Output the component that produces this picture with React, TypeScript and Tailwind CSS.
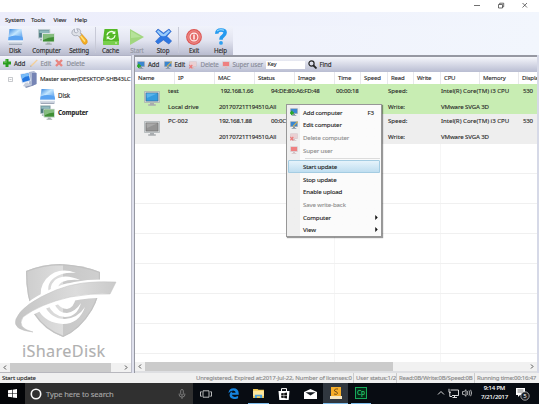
import React from 'react';

type P = { className?: string; children?: React.ReactNode };

const T = ({ className = '', children }: P) => (
  <span className={`block shrink-0 whitespace-pre ${className}`}>{children}</span>
);

const DiskIcon = ({ className = '' }: P) => (
  <svg viewBox="0 0 16 16" preserveAspectRatio="none" className={`block shrink-0 ${className}`}>
    <defs>
      <linearGradient id="disk" x1="0" y1="0" x2="1" y2="1">
        <stop offset="0" stopColor="#2f80dc" /><stop offset=".42" stopColor="#c4e7ff" /><stop offset="1" stopColor="#2f82e4" />
      </linearGradient>
    </defs>
    <path d="M1.6 0H14.4L16 12H0Z" fill="url(#disk)" />
    <path d="M.6 8L0 12H16L15.4 8Q8 5 .6 8" fill="#5aa3f2" />
    <path d="M0 11.5H16V15Q16 16 15 16H1Q0 16 0 15Z" fill="#d3dae4" />
    <path d="M0 11.5H16V12.7H0Z" fill="#f6f9fc" /><path d="M1 15.3H15" stroke="#929cac" />
  </svg>
);

const ComputersIcon = ({ className = '' }: P) => (
  <svg viewBox="0 0 16 16" preserveAspectRatio="none" className={`block shrink-0 ${className}`}>
    <path d="M.5.8H11V9H.5Z" fill="#4f7b80" stroke="#b7c6ca" /><path d="M1.3 1.5H10.3V4H1.3Z" fill="#8fb9bd" />
    <path d="M2 10H5V11.5H2Z" fill="#9eabb0" />
    <path d="M4.2 4.5H15.5V13H4.2Z" fill="#3f8f35" stroke="#d8e2e0" />
    <path d="M4.8 5H15V8Q10 8 4.8 11Z" fill="#86bd80" />
    <path d="M8.3 13.4H11.5V14.6H13V15.7H7V14.6H8.3Z" fill="#a3b0ad" />
  </svg>
);

const ServerIcon = () => (
  <svg viewBox="0 0 17 17" className="block h-[17px] w-[17px] shrink-0">
    <path d="M9 1L14 0 16.5 2V13L12 15 9 13Z" fill="#aeb9d3" /><path d="M12 2L16.5 2V13L12 15Z" fill="#7685b5" />
    <path d="M0 3L9 1.2 11 10 2 12.5Z" fill="#d6e2f4" /><path d="M1 3.8L8.4 2.3 10 9.3 2.7 11.3Z" fill="#2476df" />
    <path d="M1 3.8L8.4 2.3 9 5Q5 5 2 8Z" fill="#79bdf8" />
    <path d="M5 12L8 11.3 9 13 12 14 6 16 3 15Z" fill="#c6cedd" /><path d="M5 15.8L12 14V15L6 17Z" fill="#8794b5" />
  </svg>
);

const WrenchIcon = () => (
  <svg viewBox="0 0 17 17" className="block h-[17px] w-[17px]">
    <path d="M7.5 7L10.3 5.5 16 12Q17.2 15 14.5 16.4Q12 16.5 10.8 13.6Z" fill="#f4af22" stroke="#cf8519" strokeWidth=".5" />
    <path d="M9 7.2L14 13.5" stroke="#ffe17b" strokeWidth="1.5" />
    <path d="M3.4 1L3.6 4.2 5.5 5 7 3.5 5.7.7Q9.3.2 9.7 3.3L9.2 5.2 10.5 6.8 8.3 8.8 6.5 7.5Q2.2 8.6.8 5.2Q.5 2.4 3.4 1Z" fill="#dfe2e8" stroke="#8b91a0" strokeWidth=".6" />
  </svg>
);

const CacheIcon = () => (
  <svg viewBox="0 0 16 16" className="block h-4 w-4">
    <path d="M1.5 0H14.5L16 11V14.5Q16 16 14.5 16H1.5Q0 16 0 14.5V11Z" fill="#55b928" />
    <path d="M0 12H16V14.5Q16 16 14.5 16H1.5Q0 16 0 14.5Z" fill="#79cf4c" />
    <path d="M3.9 6.4A4.3 4.3 0 0 1 11.2 3.8M12.1 6.2A4.3 4.3 0 0 1 4.8 8.8" fill="none" stroke="#efffe7" strokeWidth="1.3" />
    <path d="M12.3 1.8V5.1H9ZM3.7 10.7V7.4H7Z" fill="#efffe7" /><circle cx="13" cy="14" r=".8" fill="#effeea" />
  </svg>
);

const StopIcon = () => (
  <svg viewBox="0 0 17 17" className="block h-[17px] w-[17px]">
    <path d="M3 1L8.5 5 14 1 16.2 3.4 11.8 8.2 16.6 13 13.8 16 8.4 12 3 16 .5 13.4 5.3 8.4 .8 3.4Z" fill="#2f78e2" stroke="#2a61c4" strokeWidth=".6" />
    <path d="M3.1 1.9L8.5 6.2 13.8 1.9 15.2 3.3 10.5 7.9Q7 8.6 5.8 7.8L1.8 3.4Z" fill="#9bccfb" />
  </svg>
);

const ExitIcon = () => (
  <svg viewBox="0 0 16 16" className="block h-4 w-4">
    <circle cx="8" cy="8" r="7.9" fill="#dd5552" /><circle cx="8" cy="8" r="6.3" fill="#e56c69" stroke="#f4aaa7" strokeWidth=".6" />
    <circle cx="8" cy="8" r="3.9" fill="none" stroke="#fff0ef" strokeWidth="1.1" /><path d="M8 5.5V10.5" stroke="#fff0ef" strokeWidth="1.5" />
  </svg>
);

const HelpIcon = () => (
  <svg viewBox="0 0 12 17" className="block h-[17px] w-3">
    <path d="M2 5.8Q1.5 2 6 2T10 5Q10 6.7 7.8 8.2Q6 9.2 6 11.8" fill="none" stroke="#249af0" strokeWidth="3.6" />
    <path d="M2 3Q5 .7 9 2.3" fill="none" stroke="#87d3ff" strokeWidth="1.4" /><circle cx="6" cy="14.9" r="1.9" fill="#2d9ff0" />
  </svg>
);

const PlayIcon = () => (
  <svg viewBox="0 0 14 16" className="block h-4 w-3.5"><path d="M0 0L14 8 0 16Z" fill="#a1d67f" /><path d="M1 2L11 8 1 9Z" fill="#b6e29a" /></svg>
);

const PlusIcon = () => (
  <svg viewBox="0 0 8 8" className="block h-2 w-2 shrink-0"><path d="M2.5 0H5.5V2.5H8V5.5H5.5V8H2.5V5.5H0V2.5H2.5Z" fill="#2a9c20" /><path d="M3.3.5V3.4H.6" stroke="#7dd569" fill="none" strokeWidth=".6" /></svg>
);
const PencilIcon = () => (
  <svg viewBox="0 0 8 8" className="block h-2 w-2 shrink-0"><path d="M0 8L1 6 6.8.4 7.8 1.3 2.2 7Z" fill="#f3cf9a" /><path d="M0 8L.7 6.2 1.8 7.2Z" fill="#aaa" /></svg>
);
const DeleteIcon = () => (
  <svg viewBox="0 0 8 8" className="block h-2 w-2 shrink-0"><path d="M1 1L7 7M7 1L1 7" stroke="#e88580" strokeWidth="2.4" /></svg>
);

const Pc = ({ kind }: { kind: 'add' | 'edit' | 'del' | 'user' }) => {
  const faded = kind === 'del' || kind === 'user';
  return (
    <svg viewBox="0 0 8 8" className="block h-2 w-2 shrink-0">
      <path d="M.3.4H7.7V5.8H.3Z" fill={faded ? '#d7c4c8' : '#8095ab'} />
      <path d="M1 1H7V5H1Z" fill={kind === 'user' ? '#ef8080' : faded ? '#ead0d3' : '#3a86d0'} />
      <path d="M3 6H5V7H6.3V7.8H1.7V7H3Z" fill={faded ? '#d5c1c4' : '#8294a2'} />
      {kind === 'add' && <path d="M1.8 2.8V7M0 5H4" stroke="#28a724" strokeWidth="1.7" />}
      {kind === 'edit' && <path d="M3 5.3L7.6.7" stroke="#d8b34e" strokeWidth="1.1" />}
      {kind === 'del' && <path d="M.3 4L3.3 7.3M3.3 4L.3 7.3" stroke="#eb7979" strokeWidth="1.2" />}
    </svg>
  );
};

const Monitor = ({ on }: { on?: boolean }) => (
  <svg viewBox="0 0 16 15" className="block h-[15px] w-4">
    <path d="M.5.5H15.5V11.5H.5Z" fill="#cdd0d2" stroke="#a1a7aa" strokeWidth=".6" />
    <path d="M2 2H14V10H2Z" fill={on ? '#369cdf' : '#949494'} stroke={on ? '#356889' : '#6c6c6c'} strokeWidth=".6" />
    <path d="M2.5 2.5H13L3 7Z" fill={on ? '#5ab4eb' : '#a9a9a9'} />
    <path d="M6 12H10V13.2H11.8V14.7H4.2V13.2H6Z" fill="#a8acaf" />
  </svg>
);

const Tool = ({ label, className, children, dim }: P & { label: string; dim?: boolean }) => (
  <div className={`flex h-full shrink-0 flex-col items-center ${className}`}>
    <div className="flex h-[19px] items-center justify-center">{children}</div>
    <T className={`mt-px text-[6.2px] leading-[8px] tracking-[-0.12px] ${dim ? 'text-[#9295a0]' : ''}`}>{label}</T>
  </div>
);

const Arrow = ({ right }: { right?: boolean }) => (
  <svg viewBox="0 0 10 9" className="block h-[9px] w-[10px] shrink-0"><path d={right ? 'M4 2.5L6 4.5 4 6.5' : 'M6 2.5L4 4.5 6 6.5'} fill="none" stroke="#505050" /></svg>
);

const Logo = () => (
  <svg viewBox="0 0 104 76" className="block h-[76px] w-[104px]">
    <defs>
      <linearGradient id="shield"><stop offset="0" stopColor="#c8c8c8" /><stop offset=".47" stopColor="#dedede" /><stop offset=".475" stopColor="#c8c8c8" /><stop offset="1" stopColor="#d3d3d3" /></linearGradient>
      <linearGradient id="sweep"><stop offset="0" stopColor="#c4c4c4" /><stop offset=".6" stopColor="#dcdcdc" /><stop offset="1" stopColor="#cacaca" /></linearGradient>
      <clipPath id="shieldEdge"><path d="M12 9Q29 2 46 2Q69 3 86 10V20Q86 34 78 48Q66 68 49 75Q30 68 20 52Q12 36 12 9Z" /></clipPath>
    </defs>
    <g clipPath="url(#shieldEdge)">
      <path d="M0 0H104V76H0Z" fill="url(#shield)" />
      <path d="M12 9Q29 2 46 2Q69 3 86 10V20Q86 34 78 48Q66 68 49 75Q30 68 20 52Q12 36 12 9Z" fill="none" stroke="#c2c2c2" strokeWidth="2.4" />
      <path d="M62 11Q44 4 32 17Q24 27 28 38L36 34Q31 23 40 16Q48 10 62 11Z" fill="#fff" />
      <path d="M66 18Q50 11 41 18Q34 25 38 33L44 31Q42 24 48 20Q55 17 66 18Z" fill="#fff" />
      <path d="M61 23Q51 19 46 25Q43 29 46 31L61 27Z" fill="#fff" />
      <path d="M19 44L30 43Q37 57 51 57Q64 56 71 45Q65 62 49 62Q32 61 25 49Z" fill="#fff" />
      <path d="M34 42L40 41Q44 51 53 51Q61 50 67 41Q63 55 51 55Q38 54 34 42Z" fill="#fff" />
      <path d="M42 39L62 35Q60 46 53 47Q46 47 42 39Z" fill="#fff" />
    </g>
    <path d="M104 18Q63 15 37 27Q5 42 -1 57Q-3 68 20 71Q8 67 11 58Q31 44 58 39Q80 35 98 36Z" fill="#fff" />
    <path d="M102 20Q66 18 42 28Q8 42 2 57Q-2 68 19 70Q2 66 9 55Q26 42 56 35Q77 31 96 32Z" fill="url(#sweep)" stroke="#c0c0c0" strokeWidth=".5" />
  </svg>
);

const headers: [string, string][] = [
  ['Name', 'w-[40px]'], ['IP', 'w-[40px]'], ['MAC', 'w-[40px]'], ['Status', 'w-[40px]'], ['Image', 'w-[40px]'],
  ['Time', 'w-[26px]'], ['Speed', 'w-[27px]'], ['Read', 'w-[26px]'], ['Write', 'w-[27px]'], ['CPU', 'w-[39px]'],
  ['Memory', 'w-[39px]'], ['Displa', 'w-[19px]'],
];

const Client = ({ on, name, ip, mac, time, drive }: { on?: boolean; name: string; ip: string; mac: string; time: string; drive: string }) => (
  <div className={`flex h-[30px] shrink-0 overflow-hidden ${on ? 'bg-[#c8edb3]' : 'bg-[#eeeeee]'}`}>
    <div className="w-[33px] shrink-0 pl-[9px] pt-[7px]"><Monitor on={on} /></div>
    <div className="flex flex-1 flex-col text-[6.1px] leading-[8px]">
      <div className="grid h-4 grid-cols-[51px_52px_65px_52px_53px_82px_1fr] pt-[3px]">
        <T>{name}</T><T className={`tracking-[-0.3px] ${on ? 'pl-[1.5px]' : ''}`}>{ip}</T><T className="tracking-[-0.2px]">{mac}</T><T className="tracking-[-0.2px]">{time}</T><T>Speed:</T><T>Intel(R) Core(TM) i3 CPU</T><T className="tracking-[-0.2px]">530</T>
      </div>
      <div className="grid grid-cols-[51px_169px_53px_1fr] pt-[3px]">
        <T>{drive}</T><T className="tracking-[-0.2px]">20170721T194510,All</T><T>Write:</T><T className="tracking-[-0.12px]">VMware SVGA 3D</T>
      </div>
    </div>
  </div>
);

const MenuRow = ({ label, kind, off, hot, extra }: { label: string; kind?: 'add' | 'edit' | 'del' | 'user'; off?: boolean; hot?: boolean; extra?: string }) => (
  <div className={`flex h-[12.6px] shrink-0 items-center rounded-[1px] pl-[2px] pr-[4px] ${hot ? 'bg-linear-to-b from-[#e9f5fc] to-[#bcdcef] outline outline-[#a4cce2] -outline-offset-1' : ''} ${off ? 'text-[#8f8f8f]' : 'text-[#222]'}`}>
    <div className="w-[13px]">{kind && <Pc kind={kind} />}</div>
    <T className="text-[6.1px] leading-[9px] tracking-[-0.13px]">{label}</T>
    {extra === 'arrow' ? <svg viewBox="0 0 3 6" className="-mr-[2px] ml-auto h-[5px] w-[3px]"><path d="M0 0L3 3 0 6Z" fill="#111" /></svg> : extra && <T className="ml-auto mr-[2px] text-[6.1px] tracking-[-0.1px]">{extra}</T>}
  </div>
);

const Task = ({ className, children }: P) => <div className={`flex h-[21px] shrink-0 items-center justify-center ${className}`}>{children}</div>;

export default function App() {
  return (
    <div className="relative flex h-[404px] w-[539px] flex-col overflow-hidden bg-[#edf0fa] font-['Noto_Sans','Open_Sans',sans-serif] text-[#292929] [-webkit-text-stroke:0.12px]">
      <header className="flex h-3 shrink-0 items-center bg-white pl-[474px]">
        <svg viewBox="0 0 60 12" className="h-3 w-[60px]" fill="none" stroke="#333" strokeWidth=".7">
          <path d="M0 5.5H6M48.5 3L53 7.5M53 3L48.5 7.5" /><path d="M24.5 4.5H28.5V8H24.5ZM25.7 4.5V3.2H29.7V6.8H28.5" />
        </svg>
      </header>
      <nav className="flex h-[14px] shrink-0 items-center bg-linear-to-r from-[#ecedfb] to-[#f2f6fd] pl-[5px] text-[6.1px] leading-[9px] tracking-[-0.15px]">
        <T className="w-[26px]">System</T><T className="w-[22.5px]">Tools</T><T className="w-[21px]">View</T><T>Help</T>
      </nav>
      <div className="flex h-[29px] shrink-0 bg-linear-to-r from-[#eeeffb] to-[#f2f6fd]">
        <div className="flex h-full w-[233px] shrink-0 rounded-tr-[2px] bg-linear-to-b from-[#f1f3fb] via-[#e2e4f0] to-[#b9bccf] pt-px">
          <Tool className="w-[30px]" label="Disk"><DiskIcon className="h-4 w-[15px]" /></Tool>
          <Tool className="w-[33px]" label="Computer"><ComputersIcon className="h-4 w-[17px]" /></Tool>
          <Tool className="w-[32px]" label="Setting"><WrenchIcon /></Tool>
          <div className="h-[26px] w-px bg-[#c8cad7]" />
          <Tool className="w-[29px]" label="Cache"><CacheIcon /></Tool>
          <Tool className="w-[24px]" label="Start" dim><PlayIcon /></Tool>
          <Tool className="w-[28px]" label="Stop"><StopIcon /></Tool>
          <div className="ml-px h-[26px] w-px bg-[#c8cad7]" />
          <Tool className="w-[30px]" label="Exit"><ExitIcon /></Tool>
          <Tool className="w-[23px]" label="Help"><HelpIcon /></Tool>
        </div>
      </div>
      <main className="flex h-[318px] shrink-0">
        <aside className="flex w-[132px] shrink-0 flex-col border-r border-[#bbbcc8] border-t border-t-[#b1b3c6] bg-white">
          <div className="flex h-[14px] shrink-0 items-center bg-linear-to-b from-[#f4f5fb] to-[#c5c9db] pl-[3px] text-[6.2px] leading-[9px] tracking-[-0.1px]">
            <PlusIcon /><T className="ml-[3px] w-[15.5px]">Add</T><PencilIcon /><T className="ml-[3px] w-[14px] text-[#888b95]">Edit</T><DeleteIcon /><T className="ml-[4px] text-[#888b95]">Delete</T>
          </div>
          <div className="flex h-[18px] items-center overflow-hidden pl-[8px]">
            <svg viewBox="0 0 5 5" className="mr-[7px] h-[5px] w-[5px] shrink-0"><path d="M.5.5H4.5V4.5H.5ZM1.5 2.5H3.5" fill="none" stroke="#a1a4ab" strokeWidth=".6" /></svg>
            <ServerIcon /><T className="ml-[3px] text-[6.1px] tracking-[-0.18px]">Master server(DESKTOP-SHB43LC</T>
          </div>
          <div className="flex h-[16px] items-center pl-[40px] text-[6.2px] tracking-[-0.1px]"><DiskIcon className="h-[15px] w-[15px]" /><T className="ml-[3px]">Disk</T></div>
          <div className="flex h-[17px] items-center pl-[40px] text-[6.2px] font-bold tracking-[-0.12px]"><ComputersIcon className="h-[15px] w-[15px]" /><T className="ml-[3px]">Computer</T></div>
          <div className="flex-1" />
          <div className="pl-[14px]"><Logo /></div>
          <T className="mb-px mt-[3px] pl-[22px] text-[16.2px] leading-[21px] tracking-[0.35px] text-[#b0b0b0]">iShareDisk</T>
          <div className="flex h-[9px] shrink-0 bg-[#f1f1f1]"><Arrow /><div className="h-full w-[101px] bg-[#cbcbcb]" /><div className="flex-1" /><Arrow right /></div>
          <div className="h-px shrink-0 bg-[#b8b8be]" />
        </aside>
        <div className="w-[2px] shrink-0 bg-[#dfe1ed]" />
        <section className="flex w-[403px] shrink-0 flex-col border-l border-t-2 border-[#9698a2] bg-white">
          <div className="flex h-[15px] shrink-0 items-center bg-linear-to-b from-[#f5f6fb] to-[#b9bdd2] pl-[2px] text-[6.2px] leading-[9px] tracking-[-0.1px]">
            <Pc kind="add" /><T className="ml-[3px] w-[15.5px]">Add</T><Pc kind="edit" /><T className="ml-[3px] w-[14px]">Edit</T><Pc kind="del" /><T className="ml-[4px] w-[21px] text-[#878a98]">Delete</T><Pc kind="user" /><T className="ml-[3px] w-[33px] text-[#878a98]">Super user</T>
            <div className="flex h-[8px] w-[39px] shrink-0 items-center bg-white pl-[2px] text-[5.5px]">Key</div>
            <svg viewBox="0 0 9 9" className="ml-[3px] h-[9px] w-[9px] shrink-0" fill="none" stroke="#262626"><circle cx="3.5" cy="3.5" r="2.6" strokeWidth="1.2" /><path d="M5.5 5.5L8.5 8.5" strokeWidth="1.8" /></svg>
            <T className="ml-[3px]">Find</T>
          </div>
          <div className="flex h-[12px] shrink-0 overflow-hidden text-[6px] leading-[12px] tracking-[-0.15px]">
            {headers.map(([h, w]) => <div key={h} className={`shrink-0 overflow-hidden whitespace-nowrap border-r border-[#e8e8ec] pl-[3px] ${w}`}>{h}</div>)}
          </div>
          <Client on name="test" drive="Local drive" ip="192.168.1.66" mac="94:DE:80:A6:FD:48" time="00:00:18" />
          <Client name="PC-002" drive="" ip="192.168.1.88" mac="00:0C:29" time="" />
          <div className="flex flex-1 flex-col overflow-hidden">
            {[0, 1, 2, 3, 4, 5, 6, 7].map((i) => <div key={i} className="flex h-[30px] shrink-0 border-b border-[#f0f0f0]"><div className="w-[200px] border-r border-[#f6f6f6]" /><div className="w-[106px] border-r border-[#f6f6f6]" /></div>)}
          </div>
          <div className="flex h-[9px] shrink-0 bg-[#f1f1f1]"><Arrow /><div className="w-[248px] bg-[#cbcbcb]" /><div className="flex-1" /><Arrow right /></div>
          <div className="h-[2px] shrink-0 bg-[#dedfe2]" />
        </section>
        <div className="flex-1 bg-[#d6d9e7]" />
      </main>
      <footer className="flex h-[10px] shrink-0 items-center bg-[#f0f0f0] pl-[2px] text-[6px] leading-[10px]">
        <T className="w-[194px] tracking-[-0.1px]">Start update</T>
        <T className="w-[158px] border-r border-[#ccc] tracking-[-0.14px] text-[#888]">Unregistered, Expired at:2017-Jul-22, Number of licenses:0</T>
        <T className="w-[43px] border-r border-[#ccc] pl-[2px] tracking-[-0.16px] text-[#888]">User status:1/2</T>
        <T className="w-[78px] border-r border-[#ccc] pl-[2px] tracking-[-0.18px] text-[#888]">Read:0B/Write:0B/Speed:0B</T>
        <T className="pl-[2px] tracking-[-0.21px] text-[#888]">Running time:00:16:47</T>
      </footer>
      <div className="flex h-[21px] shrink-0 bg-[#080c12] text-white">
        <Task className="w-[25px] bg-[#030508]"><svg viewBox="0 0 10 10" className="size-[9px]"><path d="M0 1.4L4.5.8V4.7H0ZM5.2.7L10 0V4.7H5.2ZM0 5.4H4.5V9.3L0 8.6ZM5.2 5.4H10V10L5.2 9.4Z" fill="#fff" /></svg></Task>
        <div className="flex w-[168px] shrink-0 items-center bg-[#303030] pl-[5px]">
          <svg viewBox="0 0 12 12" className="size-3 shrink-0"><circle cx="6" cy="6" r="4.7" fill="none" stroke="#f8f8f8" strokeWidth="1.6" /></svg>
          <T className="ml-[4px] text-[7.6px] leading-[10px] tracking-[-0.12px] text-[#a8a8a8]">Type here to search</T>
          <svg viewBox="0 0 8 10" className="ml-auto mr-[7px] h-[10px] w-2 shrink-0" fill="none" stroke="#9a9a9a" strokeWidth=".7"><rect x="2.7" y=".5" width="2.6" height="5.7" rx="1.3" /><path d="M1.2 4.5V6Q1.2 8 4 8T6.8 6V4.5M4 8V10" /></svg>
        </div>
        <Task className="w-[26px]"><svg viewBox="0 0 12 8" className="h-2 w-3" fill="none" stroke="#e5e5e5" strokeWidth=".8"><path d="M3 .8H9V7.2H3ZM1.8 1.8H.5V6.2H1.8M10.2 1.8H11.5V6.2H10.2" /></svg></Task>
        <Task className="w-[28px]"><svg viewBox="0 0 12 12" className="size-[11px]"><path d="M.5 5.7Q1 .3 6.2.2Q11.5.3 11.7 6V7.4H4.2Q4.5 9.8 7.7 9.7Q9.4 9.7 11 8.8V11.3Q9 12.2 6.4 12Q1.8 11.6 1.7 7.4Q2 4.6 5 3.3Q4.2 4.2 4.2 5.3H8.4Q8.3 2.7 5.7 2.6Q2.3 2.8.5 5.7Z" fill="#1684df" /></svg></Task>
        <Task className="ml-px mr-[2px] w-[21px] border-b border-[#7ebceb]"><svg viewBox="0 0 12 11" className="h-[10px] w-[11px]"><path d="M0 1H5L6 2H12V11H0Z" fill="#f2c951" /><path d="M0 3H12V9H0Z" fill="#ffe79c" /><path d="M2 11V7.3H10V11H7.8V9H4.2V11Z" fill="#4ba1dc" /></svg></Task>
        <Task className="w-[26px]"><svg viewBox="0 0 12 12" className="size-[12px]"><path d="M.5 3H11.5L10.7 12H1.3Z" fill="#fff" /><path d="M3.5 3V.6H8.5V3" fill="none" stroke="#fff" /><path d="M3.2 5.3L5.7 5V7.2H3.2ZM6.2 4.9L9 4.5V7.2H6.2ZM3.2 7.8H5.7V10L3.2 9.7ZM6.2 7.8H9V10.4L6.2 10Z" fill="#111" /></svg></Task>
        <Task className="w-[26px]"><svg viewBox="0 0 13 10" className="h-[10px] w-[13px]"><path d="M0 3L6.5 0 13 3V10H0Z" fill="#fff" /><path d="M1.5 3.2H11.5L6.5 6.4Z" fill="#151a20" /></svg></Task>
        <Task className="w-[25px] border-b border-[#7ebceb] bg-[#30373f]"><svg viewBox="0 0 12 12" className="size-[12px]"><path d="M1 0H11V10H1Z" fill="#f5ad29" /><path d="M0 9H12V12H0Z" fill="#f3e6c4" /><path d="M8 2Q4 1.5 4.5 4Q8 5 7.5 6.5Q7 8 4 7" fill="none" stroke="#765018" /></svg></Task>
        <Task className="ml-[3px] w-[20px] border-b border-[#7ebceb]"><div className="flex h-[12px] w-[12px] items-center justify-center border border-[#17a85a] bg-[#042817] text-[6.5px] leading-none text-[#29d776]">Cp</div></Task>
        <div className="flex-1" />
        <svg viewBox="0 0 38 12" className="mr-[3px] mt-[4px] h-3 w-[38px] shrink-0" fill="none" stroke="#eee" strokeWidth=".9"><path d="M1 7.5L4 4.5 7 7.5M13.5 3H21.5V8.5H15M17.5 8.5V10.5M15.5 10.5H20M12 1.8V5.2H14M12.8 5V9.5H15" /><path d="M25.5 4.6H27L29 2.7V9.3L27 7.4H25.5ZM30.2 4Q31.4 6 30.2 8M32 3.4Q33.6 6 32 8.6M33.6 2.8Q35.7 6 33.6 9.2" strokeWidth=".7" /></svg>
        <div className="flex w-[33px] shrink-0 flex-col items-center pt-[1px] text-[6px] leading-[9px] tracking-[-0.18px]"><T>9:14 PM</T><T>7/21/2017</T></div>
        <Task className="ml-[4px] mr-[9px] w-[15px]"><svg viewBox="0 0 14 14" className="size-[14px]"><path d="M0 1H9V8H4L2 10V8H0Z" fill="#fff" /><path d="M1.5 3H7.5M1.5 5H7.5" stroke="#222" strokeWidth=".6" /><circle cx="9" cy="9" r="4.2" fill="#1a1d21" stroke="#ddd" strokeWidth=".7" /><text x="9" y="11.2" textAnchor="middle" fontSize="6" fill="#fff">5</text></svg></Task>
      </div>
      <div className="absolute left-[286px] top-[104px] flex h-[133px] w-[96px] flex-col border border-[#979797] bg-linear-to-r from-[#efefef] from-[14%] to-[#fbfbfb] to-[14%] px-[1px] pt-[1px] shadow-[1px_1px_1px_#0006]">
        <MenuRow kind="add" label="Add computer" extra="F3" />
        <MenuRow kind="edit" label="Edit computer" />
        <MenuRow kind="del" label="Delete computer" off />
        <MenuRow kind="user" label="Super user" off />
        <div className="ml-[17px] mb-[1px] mt-[2px] h-px shrink-0 bg-[#dcdcdc]" />
        <MenuRow label="Start update" hot />
        <MenuRow label="Stop update" />
        <MenuRow label="Enable upload" />
        <MenuRow label="Save write-back" off />
        <MenuRow label="Computer" extra="arrow" />
        <MenuRow label="View" extra="arrow" />
      </div>
    </div>
  );
}
